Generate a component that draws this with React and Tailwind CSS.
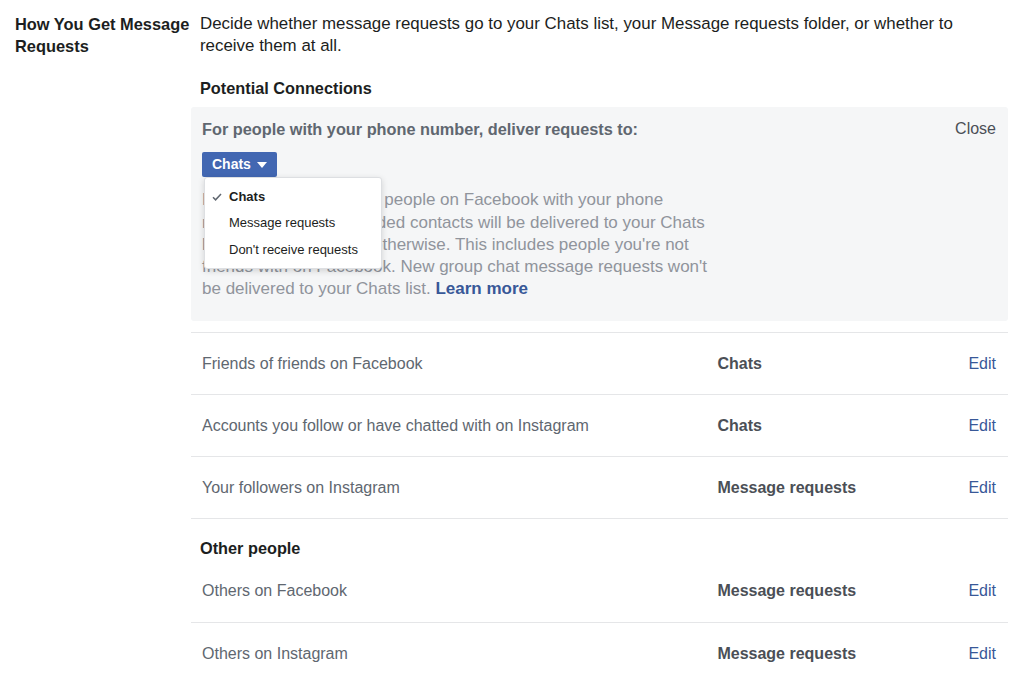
import React, { useState } from "react";

const font = { fontFamily: '"Liberation Sans", Arial, sans-serif' };

const connectionRows = [
  { label: "Friends of friends on Facebook", value: "Chats" },
  { label: "Accounts you follow or have chatted with on Instagram", value: "Chats" },
  { label: "Your followers on Instagram", value: "Message requests" },
];

const otherRows = [
  { label: "Others on Facebook", value: "Message requests" },
  { label: "Others on Instagram", value: "Message requests" },
];

function Row({ label, value, last }) {
  return (
    <div className={`flex items-center h-[62px] pl-[11px] pr-[12px] ${last ? "" : "border-b border-[#e5e6e8]"}`}>
      <div className="flex-1 text-[16px] text-[#606770]">{label}</div>
      <div className="w-[251px] text-[16px] font-bold text-[#4b4f56]">{value}</div>
      <a className="text-[16px] text-[#385898]">Edit</a>
    </div>
  );
}

export default function App() {
  const [choice, setChoice] = useState("Chats");
  const options = ["Chats", "Message requests", "Don't receive requests"];

  return (
    <div className="min-h-screen bg-white text-[#1c1e21]" style={font}>
      <div className="flex pt-[13px] pl-[15px] pr-[10px]">
        {/* left label */}
        <div className="w-[185px] shrink-0 text-[16.4px] font-bold leading-[22px] text-[#1c1e21]">
          How You Get Message Requests
        </div>

        {/* right column */}
        <div className="flex-1">
          <p className="text-[16.9px] leading-[22px] text-[#1c1e21] pr-[40px]">
            Decide whether message requests go to your Chats list, your Message requests folder, or whether to receive them at all.
          </p>

          <div className="mt-[20px] text-[16.3px] font-bold leading-[22px]">Potential Connections</div>

          {/* open editor panel */}
          <div className="mt-[8px] -ml-[9px] bg-[#f5f6f7] rounded-[3px] pl-[11px] pr-[12px] pt-[10px] pb-[21px]">
            <div className="flex justify-between items-center">
              <div className="text-[16.3px] font-bold text-[#606770]">
                For people with your phone number, deliver requests to:
              </div>
              <a className="text-[16px] text-[#4b4f56]">Close</a>
            </div>

            <div className="relative mt-[11px]">
              <button className="h-[25px] px-[10px] rounded-[2px] bg-[#4267b2] text-white text-[14px] font-bold flex items-center gap-[6px]">
                {choice}
                <svg width="10" height="6" viewBox="0 0 10 6"><path d="M0 0h10L5 6z" fill="#fff" /></svg>
              </button>

              <div className="absolute left-[2px] top-[25px] w-[178px] bg-white rounded-[3px] border border-[#dddfe2] shadow-[0_2px_6px_rgba(0,0,0,0.15)] py-[5px] z-10">
                {options.map((o) => (
                  <div
                    key={o}
                    onClick={() => setChoice(o)}
                    className="flex items-center h-[26.5px] text-[13px] text-[#1c1e21] cursor-pointer"
                  >
                    <span className="w-[24px] flex justify-center">
                      {choice === o && (
                        <svg width="10" height="8" viewBox="0 0 10 8"><path d="M1 4.2l2.6 2.6L9 1" fill="none" stroke="#606770" strokeWidth="1.5" /></svg>
                      )}
                    </span>
                    <span className={choice === o ? "font-bold" : ""}>{o}</span>
                  </div>
                ))}
              </div>

              <p className="mt-[12px] text-[17px] leading-[22.2px] text-[#90949c]">
                Message requests from people on Facebook with your phone
                <br />
                number and your uploaded contacts will be delivered to your Chats
                <br />
                list unless you choose otherwise. This includes people you're not
                <br />
                friends with on Facebook. New group chat message requests won't
                <br />
                be delivered to your Chats list.{" "}
                <a className="font-bold text-[#385898]">Learn more</a>
              </p>
            </div>
          </div>

          {/* rows */}
          <div className="mt-[11px] -ml-[9px] border-t border-[#e5e6e8]">
            {connectionRows.map((r) => (
              <Row key={r.label} {...r} />
            ))}
          </div>

          <div className="pt-[17px] pb-[1px] text-[16.3px] font-bold text-[#1c1e21]">Other people</div>

          <div className="-ml-[9px] -mt-[1px]">
            {otherRows.map((r, i) => (
              <Row key={r.label} {...r} last={i === otherRows.length - 1} />
            ))}
          </div>
        </div>
      </div>
    </div>
  );
}
